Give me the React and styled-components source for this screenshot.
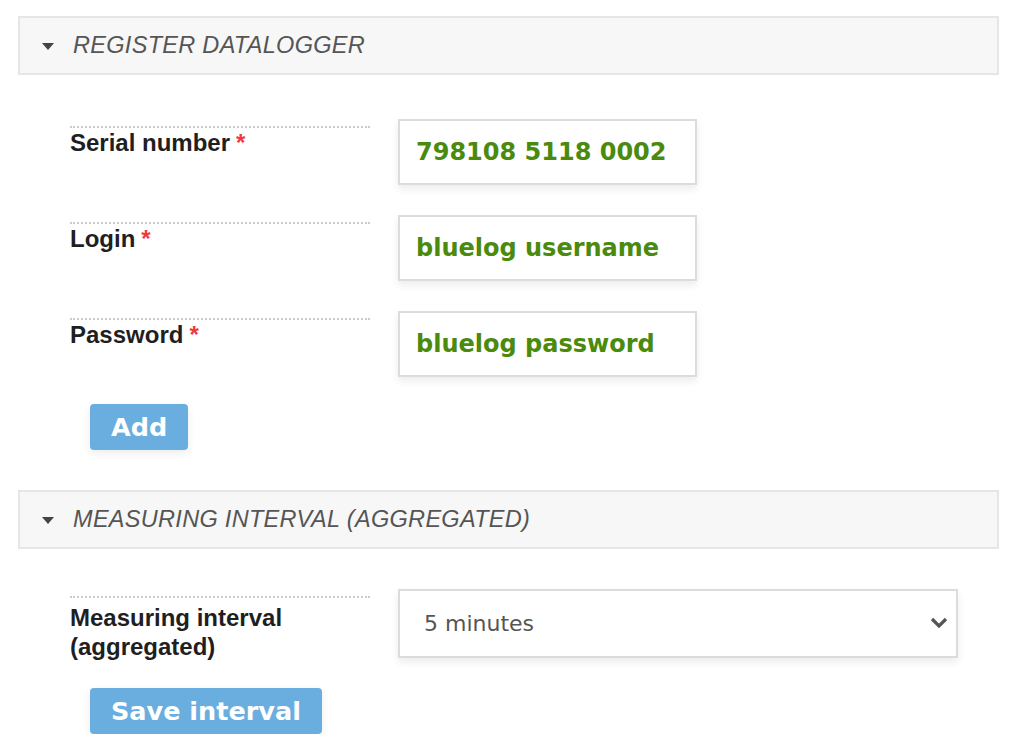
import React, { useState } from "react";
import styled, { createGlobalStyle } from "styled-components";

const GlobalStyle = createGlobalStyle`
  body {
    margin: 0;
    background: #fff;
    font-family: "Liberation Sans", Arial, sans-serif;
  }
`;

const Page = styled.div`
  width: 981px;
  padding: 16px 0 0 18px;
`;

const SectionHeader = styled.div`
  display: flex;
  align-items: center;
  gap: 19px;
  height: 55px;
  padding-left: 22px;
  background: #f7f7f7;
  border: 2px solid #e6e6e6;
  color: #555;
  font-family: "Liberation Sans", Arial, sans-serif;
  font-style: italic;
  font-size: 23.5px;
  letter-spacing: 0.3px;
  text-transform: uppercase;
`;

const Caret = styled.span`
  width: 0;
  height: 0;
  border-left: 6px solid transparent;
  border-right: 6px solid transparent;
  border-top: 7px solid #444;
  margin-top: 1px;
`;

const Section = styled.div`
  display: flex;
  flex-direction: column;
  gap: ${(p) => p.$gap || 30}px;
  padding: ${(p) => p.$top || 44}px 0 0 52px;
`;

const Row = styled.div`
  display: grid;
  grid-template-columns: 300px ${(p) => p.$width || 299}px;
  column-gap: 28px;
  align-items: start;
`;

const Label = styled.label`
  margin-top: 7px;
  padding-top: ${(p) => p.$pad || 0}px;
  border-top: 2px dotted #ccc;
  font-family: "Liberation Sans", Arial, sans-serif;
  font-weight: bold;
  font-size: 24px;
  line-height: 29px;
  color: #1f1f1f;
`;

const Required = styled.span`
  color: #f0393e;
  margin-left: 6px;
`;

const Input = styled.input`
  box-sizing: border-box;
  width: 100%;
  height: 66px;
  padding: 0 0 0 16px;
  border: 2px solid #dcdcdc;
  box-shadow: 0 4px 8px rgba(0, 0, 0, 0.08);
  outline: none;
  font-family: "DejaVu Sans", Verdana, sans-serif;
  font-weight: bold;
  font-size: 24px;
  color: #4a8a0c;
`;

const SelectWrap = styled.div`
  position: relative;
`;

const Select = styled.select`
  box-sizing: border-box;
  width: 100%;
  height: 69px;
  padding: 0 0 0 24px;
  border: 2px solid #dcdcdc;
  border-radius: 0;
  background: #fff;
  box-shadow: 0 4px 8px rgba(0, 0, 0, 0.08);
  appearance: none;
  outline: none;
  font-family: "DejaVu Sans", Verdana, sans-serif;
  font-size: 22px;
  color: #555;
`;

const Chevron = styled.svg`
  position: absolute;
  right: 10px;
  top: 28px;
  pointer-events: none;
`;

const ButtonRow = styled.div`
  padding-left: 20px;
  margin-top: ${(p) => p.$top || 0}px;
`;

const Button = styled.button`
  height: 46px;
  padding: 0 21px;
  border: none;
  border-radius: 4px;
  background: #6aaee0;
  box-shadow: 0 3px 8px rgba(0, 0, 0, 0.08);
  color: #fff;
  font-family: "DejaVu Sans", Verdana, sans-serif;
  font-weight: bold;
  font-size: 25.5px;
  cursor: pointer;
`;

const Spacer = styled.div`
  height: 40px;
`;

const fields = [
  { name: "serial", label: "Serial number", value: "798108 5118 0002" },
  { name: "login", label: "Login", value: "bluelog username" },
  { name: "password", label: "Password", value: "bluelog password" },
];

const App = () => {
  const [values, setValues] = useState(
    Object.fromEntries(fields.map((f) => [f.name, f.value]))
  );
  const [interval, setIntervalValue] = useState("5");

  return (
    <>
      <GlobalStyle />
      <Page>
        <SectionHeader>
          <Caret />
          Register datalogger
        </SectionHeader>
        <Section>
          {fields.map((f) => (
            <Row key={f.name}>
              <Label>
                {f.label}
                <Required>*</Required>
              </Label>
              <Input
                value={values[f.name]}
                onChange={(e) =>
                  setValues({ ...values, [f.name]: e.target.value })
                }
              />
            </Row>
          ))}
          <ButtonRow $top={-3}>
            <Button>Add</Button>
          </ButtonRow>
        </Section>

        <Spacer />

        <SectionHeader>
          <Caret />
          Measuring interval (aggregated)
        </SectionHeader>
        <Section $top={40} $gap={31}>
          <Row $width={560}>
            <Label $pad={5}>Measuring interval (aggregated)</Label>
            <SelectWrap>
              <Select
                value={interval}
                onChange={(e) => setIntervalValue(e.target.value)}
              >
                <option value="1">1 minute</option>
                <option value="5">5 minutes</option>
                <option value="10">10 minutes</option>
                <option value="15">15 minutes</option>
                <option value="30">30 minutes</option>
                <option value="60">60 minutes</option>
              </Select>
              <Chevron width="18" height="12" viewBox="0 0 18 12">
                <path
                  d="M2 2 L9 9 L16 2"
                  fill="none"
                  stroke="#555"
                  strokeWidth="3.2"
                />
              </Chevron>
            </SelectWrap>
          </Row>
          <ButtonRow $top={-4}>
            <Button>Save interval</Button>
          </ButtonRow>
        </Section>
      </Page>
    </>
  );
};

export default App;
